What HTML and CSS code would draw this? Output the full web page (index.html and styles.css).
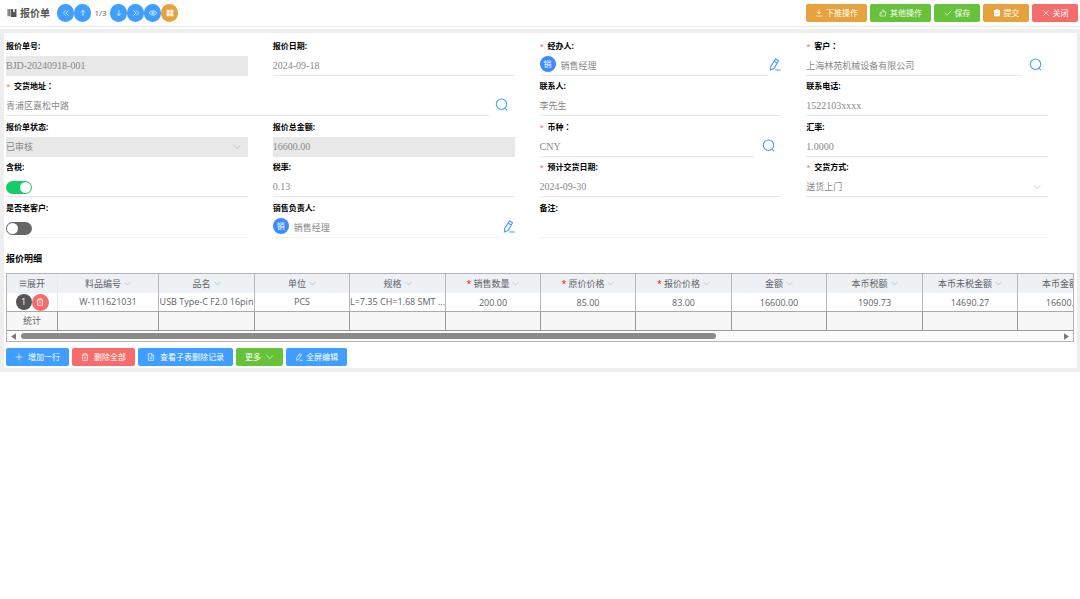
FILE: index.html
```html
<!DOCTYPE html>
<html lang="zh-CN">
<head>
<meta charset="utf-8">
<title>报价单</title>
<link rel="stylesheet" href="styles.css">
</head>
<body>
<svg class="defs" aria-hidden="true">
  <symbol id="i-search" viewBox="0 0 24 24"><circle cx="12" cy="11.5" r="9.7"/><path d="M18.5 18.5l3.7 3.7"/></symbol>
  <symbol id="i-edit" viewBox="0 0 24 24"><path d="M14 2l5.500 3.200-8.500 14.300-6.300 2.500.2-6.500zM11.500 6l5.500 3.300M13.500 22h10"/></symbol>
  <symbol id="i-down" viewBox="0 0 24 24"><path d="M2 7l10 10L22 7"/></symbol>
  <symbol id="i-dleft" viewBox="0 0 24 24"><path d="M12 4l-8 8 8 8M20 4l-8 8 8 8"/></symbol>
  <symbol id="i-dright" viewBox="0 0 24 24"><path d="M4 4l8 8-8 8M12 4l8 8-8 8"/></symbol>
  <symbol id="i-up" viewBox="0 0 24 24"><path d="M12 21V4M5 11l7-7 7 7"/></symbol>
  <symbol id="i-arrdown" viewBox="0 0 24 24"><path d="M12 3v17M5 13l7 7 7-7"/></symbol>
  <symbol id="i-eye" viewBox="0 0 24 24"><path d="M1 12c5-9 17-9 22 0-5 9-17 9-22 0z"/><circle cx="12" cy="12" r="3.5"/></symbol>
  <symbol id="i-trash" viewBox="0 0 24 24"><path d="M2 6h20M8 6V2h8v4M4.500 6v16h15V6M9.500 11v6M14.500 11v6"/></symbol>
  <symbol id="i-doc" viewBox="0 0 24 24"><path d="M4 2h11l5 5v15H4zM14 2v6h6M8 12h8M8 17h8"/></symbol>
</svg>
<header class="topbar">
  <svg class="book" viewBox="0 0 18 18"><path d="M1 2h2v13H1zM4 2h2v13H4zM7 2h10v14H7z" fill="#555"/><path d="M11 2h3v6l-1.500-1.500L11 8z" fill="#fff"/></svg>
  <h1 class="title">报价单</h1>
  <nav class="pager">
    <button class="round blue" aria-label="第一条"><svg class="ic"><use href="#i-dleft"/></svg></button>
    <button class="round blue" aria-label="上一条"><svg class="ic"><use href="#i-up"/></svg></button>
    <span class="count">1/3</span>
    <button class="round blue" aria-label="下一条"><svg class="ic"><use href="#i-arrdown"/></svg></button>
    <button class="round blue" aria-label="最后一条"><svg class="ic"><use href="#i-dright"/></svg></button>
    <button class="round blue" aria-label="查看"><svg class="ic"><use href="#i-eye"/></svg></button>
    <button class="round orange" aria-label="菜单"><svg class="ic solid" viewBox="0 0 24 24"><path d="M2 2h9v9H2zM13 2h9v9h-9zM2 13h9v9H2zM13 13h9v9h-9z"/></svg></button>
  </nav>
  <div class="actions">
    <button class="btn orange"><svg class="ic" viewBox="0 0 24 24"><path d="M12 2v13M6 9l6 6 6-6M2 21h20"/></svg>下推操作</button>
    <button class="btn green"><svg class="ic" viewBox="0 0 24 24"><path d="M3 11h4l5-9c3 0 3 3 2 7h7l-2 12H3zM7 11v5"/></svg>其他操作</button>
    <button class="btn green"><svg class="ic" viewBox="0 0 24 24"><path d="M2 12l7 7L22 5"/></svg>保存</button>
    <button class="btn orange"><svg class="ic solid" viewBox="0 0 24 24"><path d="M3 3h5V1h8v2h5v19H3z"/><path d="M8 13l3 3 6-6" stroke="#e6a23c" stroke-width="2" fill="none"/></svg>提交</button>
    <button class="btn red"><svg class="ic" viewBox="0 0 24 24"><path d="M4 4l16 16M20 4L4 20"/></svg>关闭</button>
  </div>
</header>
<main class="frame">
<section class="panel">
  <form class="form">
    <div class="field"><label for="no">报价单号:</label><div class="ctl gray"><input id="no" class="latin" value="BJD-20240918-001" readonly></div></div>
    <div class="field"><label for="date">报价日期:</label><div class="ctl"><input id="date" class="latin" value="2024-09-18"></div></div>
    <div class="field"><label for="agent" class="req">经办人:</label><div class="ctl pick"><div class="line"><span class="avatar">销</span><input id="agent" value="销售经理"></div><button type="button" class="pen" aria-label="编辑"><svg class="ic"><use href="#i-edit"/></svg></button></div></div>
    <div class="field"><label for="cust" class="req">客户<span class="colon">：</span></label><div class="ctl pick"><div class="line"><input id="cust" value="上海林苑机械设备有限公司"></div><button type="button" class="find" aria-label="搜索"><svg class="ic"><use href="#i-search"/></svg></button></div></div>

    <div class="field wide"><label for="addr" class="req">交货地址<span class="colon">：</span></label><div class="ctl pick"><div class="line"><input id="addr" value="青浦区嘉松中路"></div><button type="button" class="find" aria-label="搜索"><svg class="ic"><use href="#i-search"/></svg></button></div></div>
    <div class="field"><label for="contact">联系人:</label><div class="ctl"><input id="contact" value="李先生"></div></div>
    <div class="field"><label for="tel">联系电话:</label><div class="ctl"><input id="tel" class="latin" value="1522103xxxx"></div></div>

    <div class="field"><label for="state">报价单状态:</label><div class="ctl gray"><select id="state" disabled><option>已审核</option></select><svg class="ic arrow"><use href="#i-down"/></svg></div></div>
    <div class="field"><label for="total">报价总金额:</label><div class="ctl gray"><input id="total" class="latin" value="16600.00" readonly></div></div>
    <div class="field"><label for="cur" class="req">币种<span class="colon">：</span></label><div class="ctl pick"><div class="line"><input id="cur" class="latin" value="CNY"></div><button type="button" class="find" aria-label="搜索"><svg class="ic"><use href="#i-search"/></svg></button></div></div>
    <div class="field"><label for="rate">汇率:</label><div class="ctl"><input id="rate" class="latin" value="1.0000"></div></div>

    <div class="field"><label for="taxed">含税:</label><div class="ctl"><input id="taxed" class="switch" type="checkbox" checked></div></div>
    <div class="field"><label for="tax">税率:</label><div class="ctl"><input id="tax" class="latin" value="0.13"></div></div>
    <div class="field"><label for="due" class="req">预计交货日期:</label><div class="ctl"><input id="due" class="latin" value="2024-09-30"></div></div>
    <div class="field"><label for="ship" class="req">交货方式:</label><div class="ctl"><select id="ship"><option>送货上门</option></select><svg class="ic arrow"><use href="#i-down"/></svg></div></div>

    <div class="field"><label for="old">是否老客户:</label><div class="ctl faint"><input id="old" class="switch" type="checkbox"></div></div>
    <div class="field"><label for="owner">销售负责人:</label><div class="ctl pick"><div class="line faint"><span class="avatar">销</span><input id="owner" value="销售经理"></div><button type="button" class="pen" aria-label="编辑"><svg class="ic"><use href="#i-edit"/></svg></button></div></div>
    <div class="field wide"><label for="memo">备注:</label><div class="ctl faint"><input id="memo"></div></div>
  </form>

  <h2 class="subtitle">报价明细</h2>
  <div class="grid">
    <div class="viewport">
    <table class="items">
      <colgroup><col class="c-op"><col class="c-no"><col class="c-b"><col class="c-a"><col class="c-b"><col class="c-a"><col class="c-a"><col class="c-b"><col class="c-a"><col class="c-b"><col class="c-a"><col class="c-a"></colgroup>
      <thead><tr>
        <th><svg class="ic menu" viewBox="0 0 24 24"><path d="M1 4h22M1 12h22M1 20h22"/></svg>展开</th>
        <th>料品编号<svg class="ic sort"><use href="#i-down"/></svg></th>
        <th>品名<svg class="ic sort"><use href="#i-down"/></svg></th>
        <th>单位<svg class="ic sort"><use href="#i-down"/></svg></th>
        <th>规格<svg class="ic sort"><use href="#i-down"/></svg></th>
        <th><i class="star">*</i>销售数量<svg class="ic sort"><use href="#i-down"/></svg></th>
        <th><i class="star">*</i>原价价格<svg class="ic sort"><use href="#i-down"/></svg></th>
        <th><i class="star">*</i>报价价格<svg class="ic sort"><use href="#i-down"/></svg></th>
        <th>金额<svg class="ic sort"><use href="#i-down"/></svg></th>
        <th>本币税额<svg class="ic sort"><use href="#i-down"/></svg></th>
        <th>本币未税金额<svg class="ic sort"><use href="#i-down"/></svg></th>
        <th>本币金额<svg class="ic sort"><use href="#i-down"/></svg></th>
      </tr></thead>
      <tbody><tr>
        <td><div class="ops"><span class="index">1</span><button class="del" aria-label="删除"><svg class="ic"><use href="#i-trash"/></svg></button></div></td>
        <td>W-111621031</td><td>USB Type-C F2.0 16pin</td><td>PCS</td><td class="cut">L=7.35 CH=1.68 SMT ...</td>
        <td class="num">200.00</td><td class="num">85.00</td><td class="num">83.00</td><td class="num">16600.00</td><td class="num">1909.73</td><td class="num">14690.27</td><td class="num">16600.00</td>
      </tr></tbody>
      <tfoot><tr><td>统计</td><td></td><td></td><td></td><td></td><td></td><td></td><td></td><td></td><td></td><td></td><td></td></tr></tfoot>
    </table>
    </div>
    <div class="scroll">
      <svg class="tri" viewBox="0 0 6 8"><path d="M6 0v8L0 4z"/></svg>
      <div class="track"><div class="thumb"></div></div>
      <svg class="tri" viewBox="0 0 6 8"><path d="M0 0v8l6-4z"/></svg>
    </div>
  </div>
  <div class="tools">
    <button class="btn blue"><svg class="ic" viewBox="0 0 24 24"><path d="M12 2v20M2 12h20"/></svg>增加一行</button>
    <button class="btn red"><svg class="ic"><use href="#i-trash"/></svg>删除全部</button>
    <button class="btn blue"><svg class="ic"><use href="#i-doc"/></svg>查看子表删除记录</button>
    <button class="btn green">更多<svg class="ic"><use href="#i-down"/></svg></button>
    <button class="btn blue tight"><svg class="ic"><use href="#i-edit"/></svg>全屏编辑</button>
  </div>
</section>
</main>
</body>
</html>
```
FILE: styles.css
```css
* { box-sizing: border-box; }
body {
  margin: 0;
  background: #fefefe;
  color: #606266;
  font: 9px/12px "Open Sans", "Noto Sans CJK SC", sans-serif;
}
button, input, select { font: inherit; color: inherit; margin: 0; padding: 0; border: 0; background: none; }
button { cursor: pointer; }
.defs { position: absolute; width: 0; height: 0; }
.ic { width: 8px; height: 8px; flex: none; fill: none; stroke: currentColor; stroke-width: 2; }
.ic.solid { fill: currentColor; stroke: none; }
.blue { background: #409eff; }
.green { background: #67c23a; }
.orange { background: #e6a23c; }
.red { background: #f56c6c; }

.topbar {
  display: flex;
  align-items: center;
  height: 27px;
  padding: 0 2px 0 7px;
  border-bottom: 1px solid #ebebeb;
}
.book { width: 10px; height: 10px; }
.title { margin: 0 7px 0 3px; font-size: 10px; line-height: 16px; font-weight: 600; color: #555; }
.pager { display: flex; align-items: center; }
.round {
  display: flex;
  align-items: center;
  justify-content: center;
  width: 17px;
  height: 18px;
  border-radius: 9px;
  color: #fff;
}
.count { width: 19px; text-align: center; font-size: 8px; }
.actions { display: flex; gap: 3px; margin-left: auto; }
.btn {
  display: flex;
  align-items: center;
  justify-content: center;
  gap: 3px;
  min-width: 46px;
  height: 18px;
  padding: 0 9px;
  border-radius: 2px;
  color: #fff;
  font-size: 8px;
  white-space: nowrap;
}

.frame { margin-top: 2px; padding: 4px 3px 4px 4px; background: #eee; }
.panel { background: #fff; padding: 2px 3px 2px 2px; }

.form {
  display: grid;
  grid-template-columns: repeat(4, 1fr);
  grid-template-rows: 41px 40px 41px 40px 41px;
  column-gap: 25px;
  padding-right: 26px;
}
.field { display: flex; flex-direction: column; min-width: 0; }
.wide { grid-column: span 2; }
.field label { flex: 1; display: flex; align-items: center; font-size: 8px; font-weight: 700; color: #000; }
.colon { font-family: "Noto Sans CJK TC", sans-serif; }
.req::before { content: "*"; width: 8px; color: #f56c6c; font-weight: 400; }
.ctl { display: flex; align-items: center; height: 20px; border-bottom: 1px solid #e8e8e8; color: #888; }
.ctl input, .ctl select { flex: 1; min-width: 0; width: 100%; height: 18px; outline: 0; }
.ctl select { appearance: none; opacity: 1; color: #888; }
.ctl .latin { font-family: "Liberation Serif", serif; font-size: 10px; }
.gray { background: #e8e8e8; }
.pick { border-bottom: 0; }
.line { flex: 1; height: 20px; display: flex; align-items: center; border-bottom: 1px solid #e8e8e8; }
.faint { border-bottom-color: #f4f4f4; }
.avatar {
  align-self: flex-start;
  width: 16px;
  height: 16px;
  margin-right: 5px;
  border-radius: 8px;
  background: #3d8bff;
  color: #fff;
  font-size: 8px;
  line-height: 16px;
  text-align: center;
}
.pen, .find { display: flex; justify-content: center; align-items: center; height: 16px; align-self: flex-start; color: #409eff; }
.pen { width: 13px; }
.find { width: 26px; }
.pen .ic { width: 13px; height: 13px; }
.find .ic { width: 13px; height: 13px; }
.arrow { margin-right: 7px; color: #b4b8bf; }
.ctl .switch {
  appearance: none;
  flex: none;
  display: flex;
  width: 26px;
  height: 13px;
  margin-top: 2px;
  padding: 1px;
  border-radius: 7px;
  background: #666;
}
.switch::before { content: ""; width: 11px; height: 11px; border-radius: 6px; background: #fff; }
.ctl .switch:checked { justify-content: flex-end; background: #13ce66; }

.subtitle { margin: 14px 0 7px; font-size: 9px; line-height: 14px; color: #000; }
.grid { border: 1px solid #b4b4b4; background: #fcfcfc; }
.viewport { overflow: hidden; }
.items { width: 1106px; table-layout: fixed; border-collapse: separate; border-spacing: 0; text-align: center; }
.c-op { width: 51px; }
.c-no { width: 101px; }
.c-a { width: 95px; }
.c-b { width: 96px; }
.items th, .items td { padding: 0; border-right: 1px solid #b8b8b8; white-space: nowrap; overflow: hidden; }
.items th { height: 19px; background: #edf0f5; font-weight: 400; }
.items tbody td { height: 18px; background: #fff; }
.items th:first-child, .items tbody td:first-child { border-right-color: #e6e9ee; }
.items tfoot td { height: 20px; background: #f7f7f7; border-right: 1px solid #999; border-top: 1px solid #aaa; border-bottom: 1px solid #999; }
.items .num { padding-top: 2px; }
.items .cut { text-align: left; }
.sort { margin-left: 3px; color: #a8abb2; width: 7px; height: 7px; }
.menu { width: 8px; height: 7px; stroke-width: 3; }
.star { color: red; font-style: normal; margin-right: 2px; }
.ops { display: flex; align-items: center; justify-content: center; }
.index, .del {
  display: flex;
  align-items: center;
  justify-content: center;
  width: 16px;
  height: 16px;
  border-radius: 8px;
  background: #555;
  color: #fff;
}
.del { width: 17px; height: 17px; border-radius: 9px; background: #f56c6c; }
.scroll { display: flex; align-items: center; height: 10px; padding: 0 4px; gap: 5px; }
.tri { width: 5px; height: 7px; fill: #777; }
.track { flex: 1; }
.thumb { width: 67%; height: 6px; border-radius: 3px; background: #8b8b8b; }
.tools { display: flex; gap: 3px; margin-top: 6px; }
.tools .btn { gap: 5px; }
.tools .tight { gap: 3px; }
```
